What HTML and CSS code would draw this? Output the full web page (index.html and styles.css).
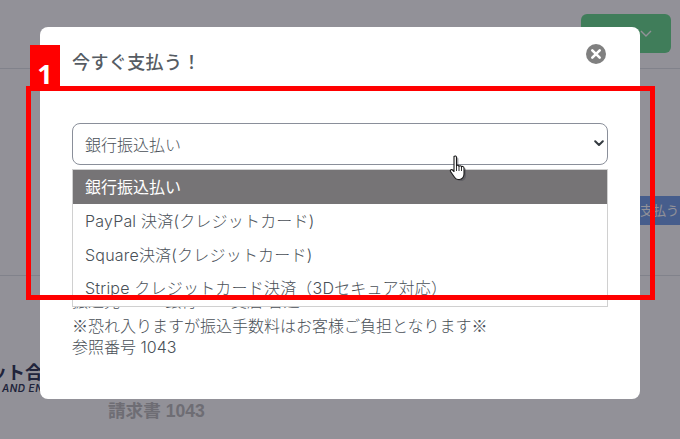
FILE: index.html
```html
<!DOCTYPE html>
<html lang="ja">
<head>
<meta charset="utf-8">
<title>今すぐ支払う</title>
<link rel="stylesheet" href="styles.css">
</head>
<body>
<div class="page">
  <header class="top-bar">
    <div class="status-btn"><svg class="status-chev" width="12" height="7" viewBox="0 0 12 7"><path d="M1 1l5 5 5-5" fill="none" stroke="#fff" stroke-width="1.400"/></svg></div>
  </header>
  <div class="pay-row"><span class="pay-btn">今すぐ支払う</span></div>
  <section class="doc">
    <div class="brand-name">ット合同会社</div>
    <div class="brand-sub">AND ENGINEERING</div>
    <h1 class="doc-title">請求書 1043</h1>
  </section>
</div>
<div class="backdrop"></div>
<div class="modal">
  <div class="modal-head">
    <h2 class="modal-title">今すぐ支払う！</h2>
    <span class="close"><svg width="20" height="20" viewBox="0 0 20 20"><circle cx="10" cy="10" r="10" fill="#808080"/><path d="M6.300 6.300l7.400 7.400M13.700 6.300l-7.400 7.400" stroke="#fff" stroke-width="2.600" stroke-linecap="round"/></svg></span>
  </div>
  <div class="modal-body">
    <div class="select">銀行振込払い<svg class="select-chev" width="10" height="7" viewBox="0 0 10 7"><path d="M1.200 1.200L5 5l3.800-3.800" fill="none" stroke="#343a40" stroke-width="2" stroke-linecap="round" stroke-linejoin="round"/></svg></div>
    <div class="info">
      <p class="info-line info-first">振込先：○○銀行 ○○支店 普通 1234567</p>
      <p class="info-line info-cjk">※恐れ入りますが振込手数料はお客様ご負担となります※</p>
      <p class="info-line">参照番号 1043</p>
    </div>
    <ul class="options">
      <li class="option option-active">銀行振込払い</li>
      <li class="option">PayPal 決済(クレジットカード)</li>
      <li class="option">Square決済(クレジットカード)</li>
      <li class="option">Stripe クレジットカード決済（3Dセキュア対応）</li>
    </ul>
  </div>
</div>
<div class="mark-box"></div>
<div class="mark-tag">1</div>
<svg class="cursor" width="22" height="28" viewBox="0 0 22 28">
  <path d="M5 1.500c1-1 2.500-.5 2.500 1v8.500c0-1 2.500-1 2.500 .5 0-1 2.500-1 2.500 .5 0-1 2.500-.8 2.500 1v6c0 3-2 5.500-4.500 5.500H9c-1.800 0-2.800-1-3.500-2.200L1.500 16.500c-.8-1.200 .8-2.500 2-1.500L5 16.500z" transform="translate(2 1.500)" fill="#4a4a52" opacity=".45"/>
  <path d="M5 1.500c1-1 2.500-.5 2.500 1v8.500c0-1 2.500-1 2.500 .5 0-1 2.500-1 2.500 .5 0-1 2.500-.8 2.500 1v6c0 3-2 5.500-4.500 5.500H9c-1.800 0-2.800-1-3.500-2.200L1.500 16.500c-.8-1.200 .8-2.500 2-1.500L5 16.500z" fill="#fff" stroke="#1a1a1a" stroke-width="1.100" stroke-linejoin="round"/>
  <path d="M7.500 11v5M10 11.500v4.500M12.500 12v4" stroke="#1a1a1a" stroke-width=".9" fill="none"/>
</svg>
</body>
</html>
```

FILE: styles.css
```css
* { box-sizing: border-box; }
html, body { margin: 0; height: 100%; overflow: hidden; }
body {
  position: relative;
  width: 680px;
  height: 439px;
  background: #fff;
  font-family: Inter, "Noto Sans CJK JP", sans-serif;
  color: #495057;
}

/* page behind the dialog */
.page { height: 439px; display: flex; flex-direction: column; overflow: hidden; }
.top-bar {
  height: 69px;
  flex: none;
  padding: 14px 9px 0 0;
  border-bottom: 1px solid #dee2e6;
  display: flex;
  justify-content: flex-end;
  align-items: flex-start;
}
.status-btn {
  width: 90px;
  height: 39px;
  border-radius: 6px;
  background: #5fd885;
  display: flex;
  align-items: center;
  justify-content: flex-end;
  padding-right: 19px;
}
.pay-row {
  height: 207px;
  flex: none;
  padding-top: 127px;
  border-bottom: 1px solid #dee2e6;
  display: flex;
  justify-content: flex-end;
}
.pay-btn {
  width: 104px;
  height: 29px;
  background: #6a9ae8;
  color: #fff;
  font-size: 13px;
  line-height: 28px;
  white-space: nowrap;
  text-align: right;
  padding-right: 1px;
}
.doc { flex: 1; display: flex; flex-direction: column; padding-top: 84px; }
.brand-name {
  margin-left: -11px;
  font-family: "Noto Sans CJK JP", sans-serif;
  font-size: 18px;
  font-weight: 700;
  line-height: 22px;
  color: #212a4a;
  white-space: nowrap;
}
.brand-sub {
  margin-left: 2px;
  font-size: 10px;
  font-style: italic;
  font-weight: 600;
  line-height: 12px;
  letter-spacing: .5px;
  color: #212a4a;
  white-space: nowrap;
}
.doc-title {
  margin: 6px 0 0 108px;
  font-family: "Liberation Sans", "Noto Sans CJK JP", sans-serif;
  font-size: 17.600px;
  font-weight: 700;
  line-height: 22px;
  color: #b8b8b8;
}

/* overlay */
.backdrop { position: absolute; inset: 0; background: rgba(33, 31, 45, .49); }
.modal {
  position: absolute;
  left: 40px;
  top: 27px;
  width: 600px;
  height: 372px;
  background: #fff;
  border-radius: 8px;
  padding: 0 32px;
}
.modal-head {
  height: 60px;
  display: flex;
  align-items: center;
  justify-content: space-between;
  padding-top: 8px;
}
.modal-title {
  margin: 0;
  font-family: "Noto Sans CJK JP", sans-serif;
  font-size: 18px;
  font-weight: 500;
  letter-spacing: .4px;
  color: #565c63;
}
.close { width: 20px; height: 20px; margin: -14px 2px 0 0; }
.modal-body { position: relative; padding-top: 36px; }
.select {
  height: 42px;
  width: 536px;
  border: 1px solid #8a8f9a;
  border-radius: 8px;
  padding: 0 12px;
  display: flex;
  align-items: center;
  justify-content: space-between;
  font-size: 16px;
  font-weight: 300;
  color: #495057;
}
.select-chev { margin-right: -9px; margin-top: -1px; }
.info {
  padding-top: 125px;
  font-size: 16px;
  font-weight: 300;
  line-height: 22px;
  color: #495057;
}
.info-line { margin: 0; white-space: nowrap; }
.info-first { margin-bottom: 2px; }
.info-cjk { font-family: "Noto Sans CJK JP", sans-serif; }
.options {
  position: absolute;
  left: 0;
  top: 82px;
  width: 536px;
  height: 138px;
  margin: 0;
  padding: 0;
  list-style: none;
  background: #fff;
  border: 1px solid #d0d0d0;
  overflow: hidden;
}
.option {
  height: 33.500px;
  line-height: 35px;
  padding: 0 12px;
  font-size: 16px;
  font-weight: 300;
  letter-spacing: .2px;
  color: #495057;
  white-space: nowrap;
}
.option-active { height: 34px; background: #767476; color: #fff; font-weight: 400; letter-spacing: 0; line-height: 34px; }

/* annotation */
.mark-box {
  position: absolute;
  left: 26px;
  top: 86px;
  width: 629px;
  height: 214px;
  border: 5px solid #f00;
}
.mark-tag {
  position: absolute;
  left: 30px;
  top: 45px;
  width: 30px;
  height: 42px;
  background: #f00;
  color: #fff;
  font-family: "Open Sans", sans-serif;
  font-weight: 700;
  font-size: 27px;
  line-height: 57px;
  text-align: center;
  overflow: hidden;
}
.cursor { position: absolute; left: 449px; top: 155px; }
```
